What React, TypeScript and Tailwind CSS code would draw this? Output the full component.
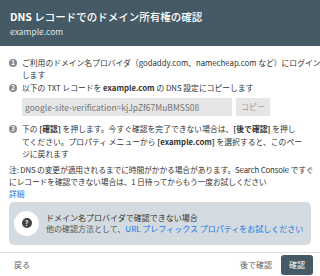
export default function App() {
  const font = { fontFamily: '"Noto Sans CJK JP", "Noto Sans", sans-serif' }
  const badge =
    'mt-[2px] w-[8px] h-[8px] shrink-0 rounded-full bg-[#8a8a8a] text-white text-[6px] leading-[8px] text-center font-bold'
  return (
    <div className="w-[320px] h-[276px] bg-white overflow-hidden flex flex-col text-[#333333]" style={font}>
      {/* Header */}
      <div className="h-[46px] shrink-0 bg-[#455a64] px-[10px] pt-[9px] text-white">
        <div className="text-[10.5px] leading-[15px] whitespace-nowrap">
          <span className="font-bold">DNS</span> <span className="font-medium">レコードでのドメイン所有権の確認</span>
        </div>
        <div className="text-[8.5px] leading-[14px] text-[#dfe5e8]">example.com</div>
      </div>

      {/* Body */}
      <div className="flex-1 px-[9px] pt-[11px] text-[7.8px] leading-[12px] whitespace-nowrap">
        <div className="flex gap-[5px]">
          <span className={badge}>1</span>
          <div>
            ご利用のドメイン名プロバイダ（godaddy.com、namecheap.com など）にログイン
            <br />
            します
          </div>
        </div>
        <div className="flex gap-[5px] mt-[1px]">
          <span className={badge}>2</span>
          <div>
            以下の TXT レコードを <span className="font-bold">example.com</span> の DNS 設定にコピーします
            <div className="flex gap-[4px] mt-[4px]">
              <div className="w-[210px] h-[18px] bg-[#e6e6e6] px-[3px] text-[#757575] text-[8.5px] leading-[18px] overflow-hidden">
                google-site-verification=kjJpZf67MuBMSS08
              </div>
              <div className="w-[34px] h-[18px] bg-[#e6e6e6] text-[#9e9e9e] text-[8px] leading-[18px] text-center">コピー</div>
            </div>
          </div>
        </div>
        <div className="flex gap-[5px] mt-[7px] leading-[12.5px]">
          <span className={badge}>3</span>
          <div>
            下の <span className="font-bold">[確認]</span> を押します。今すぐ確認を完了できない場合は、
            <span className="font-bold">[後で確認]</span> を押し
            <br />
            てください。プロパティ メニューから <span className="font-bold">[example.com]</span> を選択すると、このペー
            <br />
            ジに戻れます
          </div>
        </div>
        <div className="mt-[3px] tracking-[-0.15px]">
          注: DNS の変更が適用されるまでに時間がかかる場合があります。Search Console ですぐ
          <br />
          にレコードを確認できない場合は、1 日待ってからもう一度お試しください
        </div>
        <div className="text-[#1a73e8]">詳細</div>

        <div className="mt-[2px] h-[43px] rounded-[5px] bg-[#d3dbe0] flex items-center pl-[5px] gap-[7px]">
          <div className="w-[25px] h-[25px] rounded-full bg-white flex items-center justify-center">
            <div className="w-[10px] h-[10px] rounded-full bg-[#424242] text-white text-[7px] leading-[10px] text-center font-bold">?</div>
          </div>
          <div className="leading-[11px] text-[8px]">
            <div className="text-[#333333]">ドメイン名プロバイダで確認できない場合</div>
            <div className="text-[#555555]">
              他の確認方法として、<span className="text-[#1a73e8]">URL プレフィックス プロパティをお試しください</span>
            </div>
          </div>
        </div>
      </div>

      {/* Footer */}
      <div className="h-[24px] shrink-0 border-t border-[#e0e0e0] flex items-center pl-[14px] pr-[7px] text-[8px]">
        <span className="text-[#616161]">戻る</span>
        <span className="ml-auto text-[#616161]">後で確認</span>
        <span className="ml-[9px] h-[20px] px-[8px] rounded-[3px] bg-[#455a64] text-white leading-[20px]">確認</span>
      </div>
    </div>
  )
}
